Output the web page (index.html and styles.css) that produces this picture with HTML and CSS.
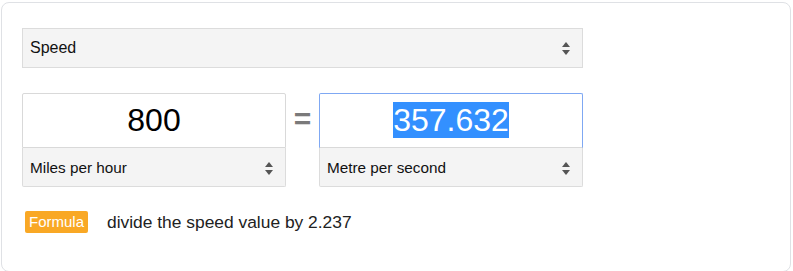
FILE: index.html
```html
<!DOCTYPE html>
<html>
<head>
<meta charset="utf-8">
<link rel="stylesheet" href="styles.css">
</head>
<body>
<div class="card">
  <div class="unit-select wide">
    <span class="label">Speed</span>
    <svg class="arrows" width="8" height="13" viewBox="0 0 8 13"><polygon points="0,5 4,0 8,5"/><polygon points="0,8 8,8 4,13"/></svg>
  </div>
  <div class="row">
    <div class="conv">
      <div class="value">800</div>
      <div class="unit-select">
        <span class="label">Miles per hour</span>
        <svg class="arrows" width="8" height="13" viewBox="0 0 8 13"><polygon points="0,5 4,0 8,5"/><polygon points="0,8 8,8 4,13"/></svg>
      </div>
    </div>
    <div class="eq">=</div>
    <div class="conv">
      <div class="value focus"><span class="sel">357.632</span></div>
      <div class="unit-select">
        <span class="label">Metre per second</span>
        <svg class="arrows" width="8" height="13" viewBox="0 0 8 13"><polygon points="0,5 4,0 8,5"/><polygon points="0,8 8,8 4,13"/></svg>
      </div>
    </div>
  </div>
  <div class="formula">
    <span class="badge">Formula</span>
    <span class="ftext">divide the speed value by 2.237</span>
  </div>
</div>
</body>
</html>
```
FILE: styles.css
```css
html, body {
  margin: 0;
  padding: 0;
  background: #fff;
}
body {
  font-family: "Liberation Sans", Arial, sans-serif;
  color: #222;
}
.card {
  box-sizing: border-box;
  margin: 2px 0 0 1px;
  width: 790px;
  height: 270px;
  border: 1px solid #dfe1e5;
  border-radius: 8px;
  padding: 25px 0 0 20px;
}
.unit-select {
  box-sizing: border-box;
  height: 40px;
  background: #f4f4f4;
  border: 1px solid #dcdcdc;
  display: flex;
  align-items: center;
  justify-content: space-between;
  padding: 0 12px 0 7px;
  font-size: 16px;
  color: #111;
}
.unit-select.wide {
  width: 561px;
}
.conv .unit-select {
  border-top: none;
  height: 39px;
  border-radius: 0 0 2px 2px;
  font-size: 15.3px;
  padding-top: 2px;
}
.arrows {
  fill: #555;
  display: block;
}
.row {
  display: flex;
  margin-top: 25px;
}
.conv {
  width: 264px;
  display: flex;
  flex-direction: column;
}
.value {
  box-sizing: border-box;
  height: 55px;
  border: 1px solid #d9d9d9;
  border-radius: 2px 2px 0 0;
  font-size: 32px;
  line-height: 52px;
  text-align: center;
  color: #000;
}
.value.focus {
  border-color: #7fa8f3;
  border-bottom-color: #d9d9d9;
}
.sel {
  background: #3390ff;
  color: #fff;
}
.eq {
  width: 33px;
  text-align: center;
  font-size: 30px;
  font-weight: bold;
  line-height: 52px;
  color: #7a7a7a;
}
.formula {
  display: flex;
  align-items: center;
  margin: 24px 0 0 3px;
}
.badge {
  background: #f9a825;
  color: #fff;
  font-size: 15px;
  line-height: 22px;
  padding: 0 4px;
  border-radius: 2px;
}
.ftext {
  margin-left: 19px;
  font-size: 17.4px;
  color: #222;
}
```
